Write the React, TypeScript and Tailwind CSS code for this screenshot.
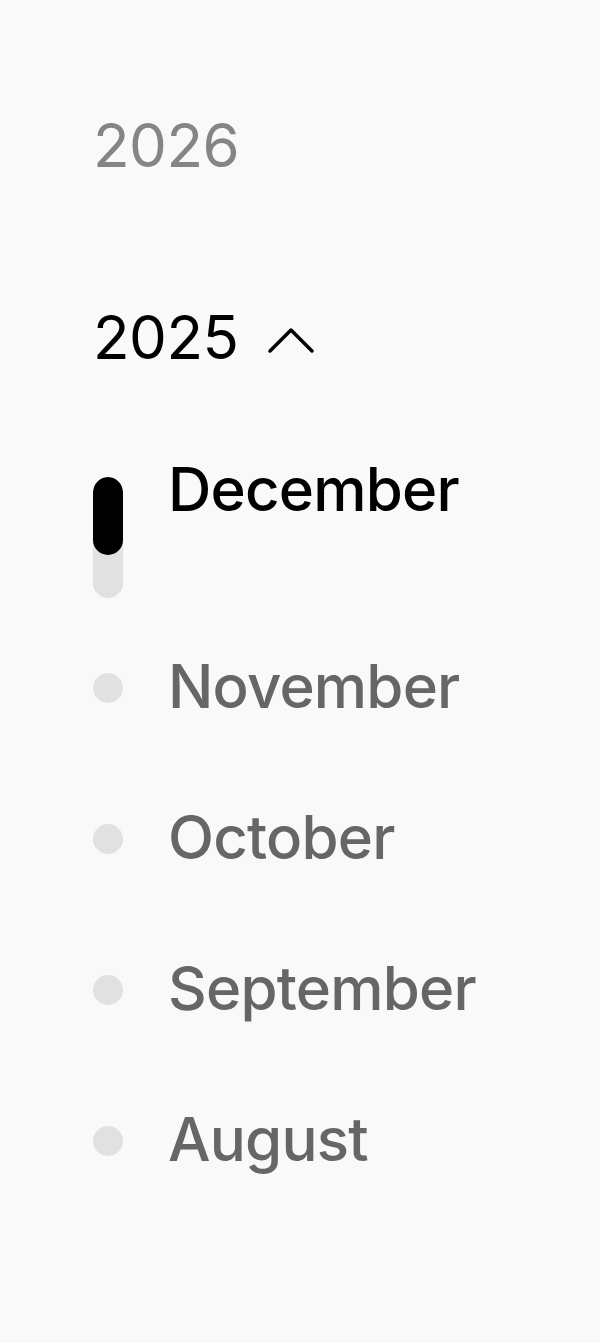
const months = ['November', 'October', 'September', 'August'];

export default function App() {
  return (
    <div
      className="min-h-screen w-full bg-[#f9f9f9] pl-[93px] pt-[115px] antialiased"
      style={{ fontFamily: 'Inter, "Noto Sans", sans-serif' }}
    >
      <div className="h-[60px] text-[60px] leading-none tracking-[-0.5px] text-[#858585]">2026</div>

      <div className="mt-[132px] flex h-[60px] items-center">
        <span className="text-[60px] leading-none tracking-[-0.5px] text-black">2025</span>
        {/* chevron up */}
        <svg className="ml-[28px] mt-[6px] h-[30px] w-[48px]" viewBox="0 0 48 30" fill="none">
          <polyline
            points="3,26 24,5 45,26"
            stroke="black"
            strokeWidth={3.5}
            strokeLinecap="round"
            strokeLinejoin="round"
          />
        </svg>
      </div>

      <div className="mt-[92px] flex flex-col">
        <div className="flex items-start">
          <div className="mt-[18px] h-[121px] w-[30px] overflow-hidden rounded-full bg-[#e1e1e1]">
            <div className="h-[78px] w-full rounded-full bg-black" />
          </div>
          <span className="ml-[45px] text-[60px] font-medium leading-none tracking-[-0.8px] text-black">
            December
          </span>
        </div>

        {months.map((m, i) => (
          <div key={m} className={`flex h-[60px] items-center ${i === 0 ? 'mt-[58px]' : 'mt-[91px]'}`}>
            <div className="mt-[4px] h-[30px] w-[30px] rounded-full bg-[#e1e1e1]" />
            <span className="ml-[45px] text-[60px] font-medium leading-none tracking-[-0.8px] text-[#666666]">
              {m}
            </span>
          </div>
        ))}
      </div>
    </div>
  );
}
